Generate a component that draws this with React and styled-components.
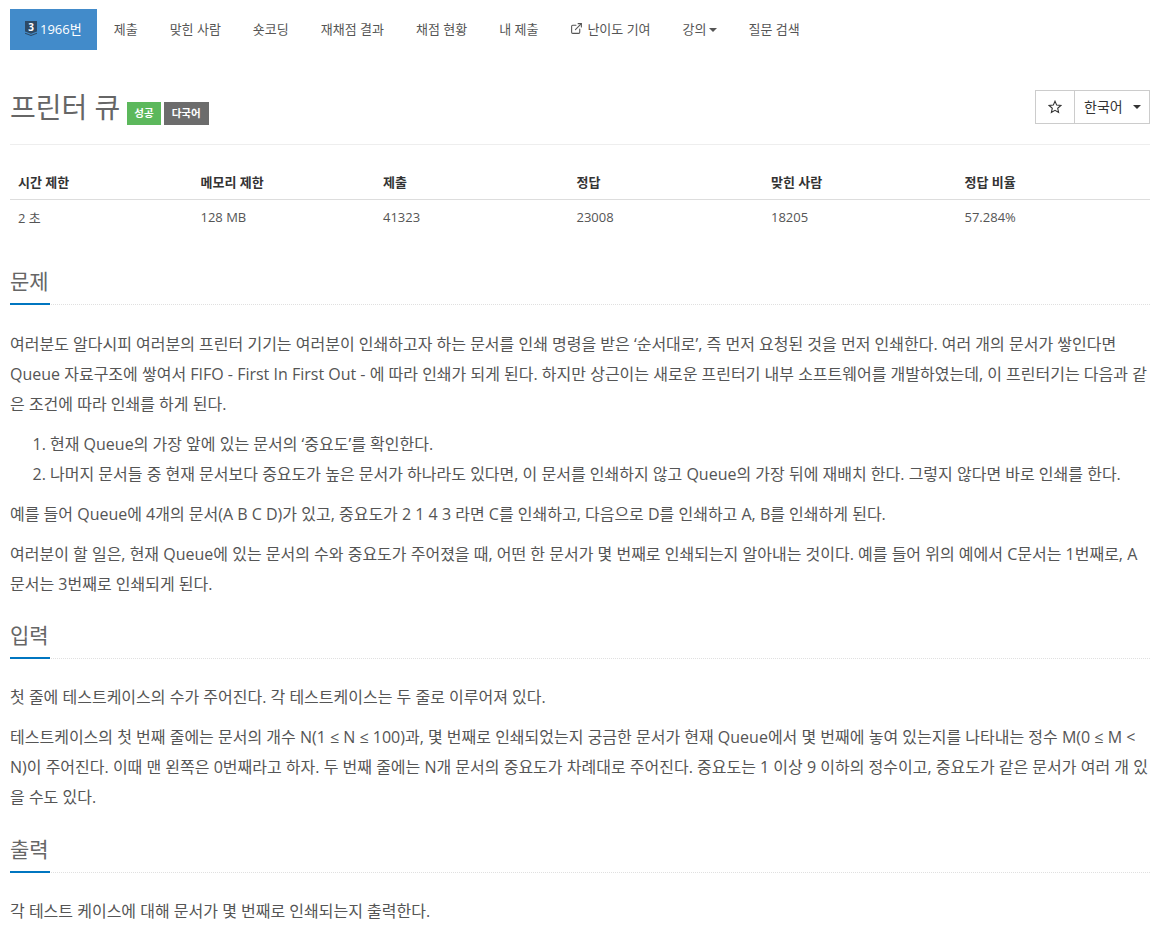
import React from "react";
import styled, { createGlobalStyle } from "styled-components";
import { ExternalLink } from "lucide-react";

const Global = createGlobalStyle`
  html, body { margin: 0; padding: 0; background: #fff; overflow: hidden; height: 927px; }
  body { font-family: "Open Sans", "Noto Sans CJK KR", sans-serif; color: #555; }
  * { box-sizing: border-box; }
`;

const Page = styled.div`
  width: 1140px;
  margin-left: 10px;
`;

const Nav = styled.nav`
  display: flex;
  height: 41px;
  margin-top: 9px;
  align-items: stretch;
`;

const NavItem = styled.a`
  display: flex;
  align-items: center;
  padding: 0 ${(p) => (p.$active ? 15 : 16)}px 2px;
  margin-right: ${(p) => (p.$active ? 1 : 0)}px;
  font-size: 13px;
  white-space: nowrap;
  color: ${(p) => (p.$active ? "#fff" : "#555")};
  background: ${(p) => (p.$active ? "#428bca" : "transparent")};
  svg { flex: none; }
`;

const Shield = styled.svg`
  width: 12px;
  height: 15px;
  margin-right: 3px;
`;

const LinkIcon = styled(ExternalLink)`
  margin-right: 4px;
`;

const Caret = styled.span`
  display: inline-block;
  width: 0;
  height: 0;
  margin-left: ${(p) => p.$gap ?? 2}px;
  margin-top: 2px;
  border-top: 4px solid ${(p) => p.$color || "#555"};
  border-left: 4px solid transparent;
  border-right: 4px solid transparent;
`;

const TitleRow = styled.div`
  display: flex;
  align-items: flex-start;
  justify-content: space-between;
  margin-top: 30px;
  height: 65px;
  padding-top: 10px;
  border-bottom: 1px solid #eee;
`;

const TitleLeft = styled.div`
  display: flex;
  align-items: flex-end;
`;

const Title = styled.h1`
  margin: 0;
  font-size: 28px;
  font-weight: 400;
  line-height: 34px;
  padding-bottom: 1px;
  color: #666;
`;

const Label = styled.span`
  display: inline-block;
  height: 23px;
  line-height: 22px;
  padding: 0 ${(p) => p.$pad}px;
  margin-left: ${(p) => p.$gap}px;
  font-size: 10.5px;
  font-weight: 700;
  color: #fff;
  background: ${(p) => p.$bg};
`;

const BtnGroup = styled.div`
  display: flex;
  width: 115px;
  height: 34px;
  border: 1px solid #ccc;
  color: #333;
`;

const StarBtn = styled.div`
  width: 39px;
  display: flex;
  align-items: center;
  justify-content: center;
  border-right: 1px solid #ccc;
`;

const StarIcon = styled.svg`
  width: 14px;
  height: 14px;
`;

const LangBtn = styled.div`
  flex: 1;
  display: flex;
  align-items: center;
  justify-content: space-between;
  padding: 0 8px 2px 9px;
  font-size: 14px;
`;

const InfoTable = styled.div`
  margin-top: 20px;
`;

const InfoRow = styled.div`
  display: grid;
  grid-template-columns: 182.5px 182.5px 193.5px 194.5px 193.5px 1fr;
  height: ${(p) => p.$h}px;
  padding-bottom: 2px;
  align-items: center;
  border-bottom: ${(p) => (p.$head ? "1px solid #ddd" : "none")};
  font-size: 13px;
  font-weight: ${(p) => (p.$head ? 700 : 400)};
  color: ${(p) => (p.$head ? "#333" : "#555")};
`;

const Cell = styled.div`
  padding-left: 8px;
`;

const Section = styled.section`
  margin-top: ${(p) => p.$top}px;
`;

const Headline = styled.div`
  height: 39px;
  border-bottom: 1px dotted #e0e0e0;
`;

const HeadText = styled.h2`
  margin: 0;
  font-size: 21px;
  font-weight: 400;
  line-height: 30px;
  height: 39px;
  width: 40px;
  border-bottom: 2px solid #0076c0;
  white-space: nowrap;
  color: #666;
`;

const Para = styled.p`
  margin: ${(p) => p.$top ?? 10}px 0 0;
  font-size: 16px;
  line-height: 30px;
  color: #555;
`;

const List = styled.ol`
  margin: 10px 0 0;
  padding-left: 40px;
  font-size: 16px;
  line-height: 30px;
`;

const nav = ["제출", "맞힌 사람", "숏코딩", "재채점 결과", "채점 현황", "내 제출"];
const cols = ["시간 제한", "메모리 제한", "제출", "정답", "맞힌 사람", "정답 비율"];
const vals = ["2 초", "128 MB", "41323", "23008", "18205", "57.284%"];

export default function App() {
  return (
    <Page>
      <Global />
      <Nav>
        <NavItem $active>
          <Shield viewBox="0 0 12 15">
            <path d="M0 0h12v10.5l-6 2.2-6-2.2z" fill="#2d4a66" />
            <path d="M0 12.2l6 2.2 6-2.2" fill="none" stroke="#2d4a66" strokeWidth="1.1" />
            <text x="6" y="9.7" textAnchor="middle" fontSize="10" fontWeight="700" fill="#fff" fontFamily="Open Sans">3</text>
          </Shield>
          1966번
        </NavItem>
        {nav.map((n) => <NavItem key={n}>{n}</NavItem>)}
        <NavItem>
          <LinkIcon size={13} />
          난이도 기여
        </NavItem>
        <NavItem>강의<Caret /></NavItem>
        <NavItem>질문 검색</NavItem>
      </Nav>
      <TitleRow>
        <TitleLeft>
          <Title>프린터 큐</Title>
          <Label $bg="#5cb85c" $gap={7} $pad={7}>성공</Label>
          <Label $bg="#6c6c6c" $gap={3} $pad={8}>다국어</Label>
        </TitleLeft>
        <BtnGroup>
          <StarBtn>
            <StarIcon viewBox="0 0 14 14">
              <path d="M7 1.2l1.7 3.9 4.2.4-3.2 2.8.9 4.1L7 10.3l-3.6 2.1.9-4.1L1.1 5.5l4.2-.4z" fill="none" stroke="#333" strokeWidth="1.1" strokeLinejoin="miter" />
            </StarIcon>
          </StarBtn>
          <LangBtn>한국어<Caret $gap={0} $color="#333" /></LangBtn>
        </BtnGroup>
      </TitleRow>
      <InfoTable>
        <InfoRow $head $h={35}>{cols.map((c) => <Cell key={c}>{c}</Cell>)}</InfoRow>
        <InfoRow $h={36}>{vals.map((c) => <Cell key={c}>{c}</Cell>)}</InfoRow>
      </InfoTable>
      <Section $top={30}>
        <Headline><HeadText>문제</HeadText></Headline>
        <Para $top={24}>여러분도 알다시피 여러분의 프린터 기기는 여러분이 인쇄하고자 하는 문서를 인쇄 명령을 받은 ‘순서대로’, 즉 먼저 요청된 것을 먼저 인쇄한다. 여러 개의 문서가 쌓인다면 Queue 자료구조에 쌓여서 FIFO - First In First Out - 에 따라 인쇄가 되게 된다. 하지만 상근이는 새로운 프린터기 내부 소프트웨어를 개발하였는데, 이 프린터기는 다음과 같은 조건에 따라 인쇄를 하게 된다.</Para>
        <List>
          <li>현재 Queue의 가장 앞에 있는 문서의 ‘중요도’를 확인한다.</li>
          <li>나머지 문서들 중 현재 문서보다 중요도가 높은 문서가 하나라도 있다면, 이 문서를 인쇄하지 않고 Queue의 가장 뒤에 재배치 한다. 그렇지 않다면 바로 인쇄를 한다.</li>
        </List>
        <Para>예를 들어 Queue에 4개의 문서(A B C D)가 있고, 중요도가 2 1 4 3 라면 C를 인쇄하고, 다음으로 D를 인쇄하고 A, B를 인쇄하게 된다.</Para>
        <Para>여러분이 할 일은, 현재 Queue에 있는 문서의 수와 중요도가 주어졌을 때, 어떤 한 문서가 몇 번째로 인쇄되는지 알아내는 것이다. 예를 들어 위의 예에서 C문서는 1번째로, A 문서는 3번째로 인쇄되게 된다.</Para>
      </Section>
      <Section $top={21}>
        <Headline><HeadText>입력</HeadText></Headline>
        <Para $top={23}>첫 줄에 테스트케이스의 수가 주어진다. 각 테스트케이스는 두 줄로 이루어져 있다.</Para>
        <Para>테스트케이스의 첫 번째 줄에는 문서의 개수 N(1 ≤ N ≤ 100)과, 몇 번째로 인쇄되었는지 궁금한 문서가 현재 Queue에서 몇 번째에 놓여 있는지를 나타내는 정수 M(0 ≤ M &lt; N)이 주어진다. 이때 맨 왼쪽은 0번째라고 하자. 두 번째 줄에는 N개 문서의 중요도가 차례대로 주어진다. 중요도는 1 이상 9 이하의 정수이고, 중요도가 같은 문서가 여러 개 있을 수도 있다.</Para>
      </Section>
      <Section $top={22}>
        <Headline><HeadText>출력</HeadText></Headline>
        <Para $top={23}>각 테스트 케이스에 대해 문서가 몇 번째로 인쇄되는지 출력한다.</Para>
      </Section>
    </Page>
  );
}
